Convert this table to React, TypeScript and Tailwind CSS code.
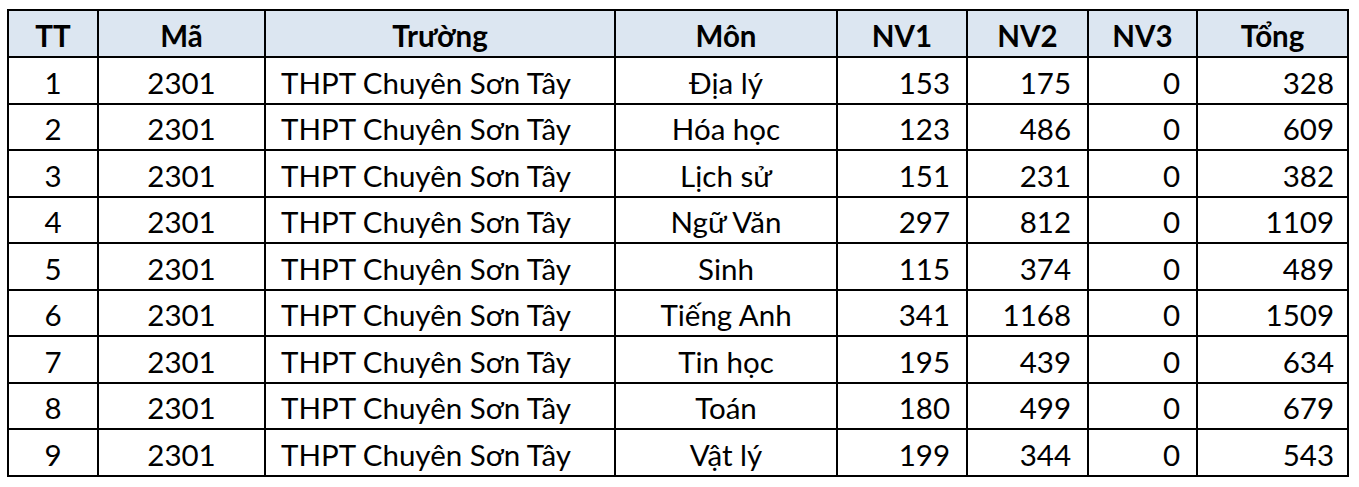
const rows = [
  { tt: 1, mon: 'Địa lý', nv1: 153, nv2: 175, nv3: 0, tong: 328 },
  { tt: 2, mon: 'Hóa học', nv1: 123, nv2: 486, nv3: 0, tong: 609 },
  { tt: 3, mon: 'Lịch sử', nv1: 151, nv2: 231, nv3: 0, tong: 382 },
  { tt: 4, mon: 'Ngữ Văn', nv1: 297, nv2: 812, nv3: 0, tong: 1109 },
  { tt: 5, mon: 'Sinh', nv1: 115, nv2: 374, nv3: 0, tong: 489 },
  { tt: 6, mon: 'Tiếng Anh', nv1: 341, nv2: 1168, nv3: 0, tong: 1509 },
  { tt: 7, mon: 'Tin học', nv1: 195, nv2: 439, nv3: 0, tong: 634 },
  { tt: 8, mon: 'Toán', nv1: 180, nv2: 499, nv3: 0, tong: 679 },
  { tt: 9, mon: 'Vật lý', nv1: 199, nv2: 344, nv3: 0, tong: 543 },
];

const headers = ['TT', 'Mã', 'Trường', 'Môn', 'NV1', 'NV2', 'NV3', 'Tổng'];
const widths = ['w-[90px]', 'w-[167px]', 'w-[350px]', 'w-[222px]', 'w-[130px]', 'w-[121px]', 'w-[109px]', 'w-[151px]'];

export default function App() {
  // bảng kiểu Excel, viền đen 2px
  const cell = 'border-2 border-black p-0 pt-[4px] leading-none';
  return (
    <div className="bg-white w-[1359px] h-[487px] pt-[9px] pl-[7px] font-['Lato','Liberation_Sans',sans-serif] text-[29.5px] text-black">
      <table className="border-collapse table-fixed">
        <colgroup>
          {widths.map((w, i) => (
            <col key={i} className={w} />
          ))}
        </colgroup>
        <thead>
          <tr className="bg-[#dce6f1] h-[47px]">
            {headers.map((h) => (
              <th key={h} className={`${cell} font-bold text-center`}>
                {h}
              </th>
            ))}
          </tr>
        </thead>
        <tbody>
          {rows.map((r) => (
            <tr key={r.tt} className="h-[46.5px]">
              <td className={`${cell} text-center`}>{r.tt}</td>
              <td className={`${cell} text-center`}>2301</td>
              <td className={`${cell} text-left pl-[15px]`}>THPT Chuyên Sơn Tây</td>
              <td className={`${cell} text-center`}>{r.mon}</td>
              <td className={`${cell} text-right pr-[16px]`}>{r.nv1}</td>
              <td className={`${cell} text-right pr-[16px]`}>{r.nv2}</td>
              <td className={`${cell} text-right pr-[16px]`}>{r.nv3}</td>
              <td className={`${cell} text-right pr-[13px]`}>{r.tong}</td>
            </tr>
          ))}
        </tbody>
      </table>
    </div>
  );
}
